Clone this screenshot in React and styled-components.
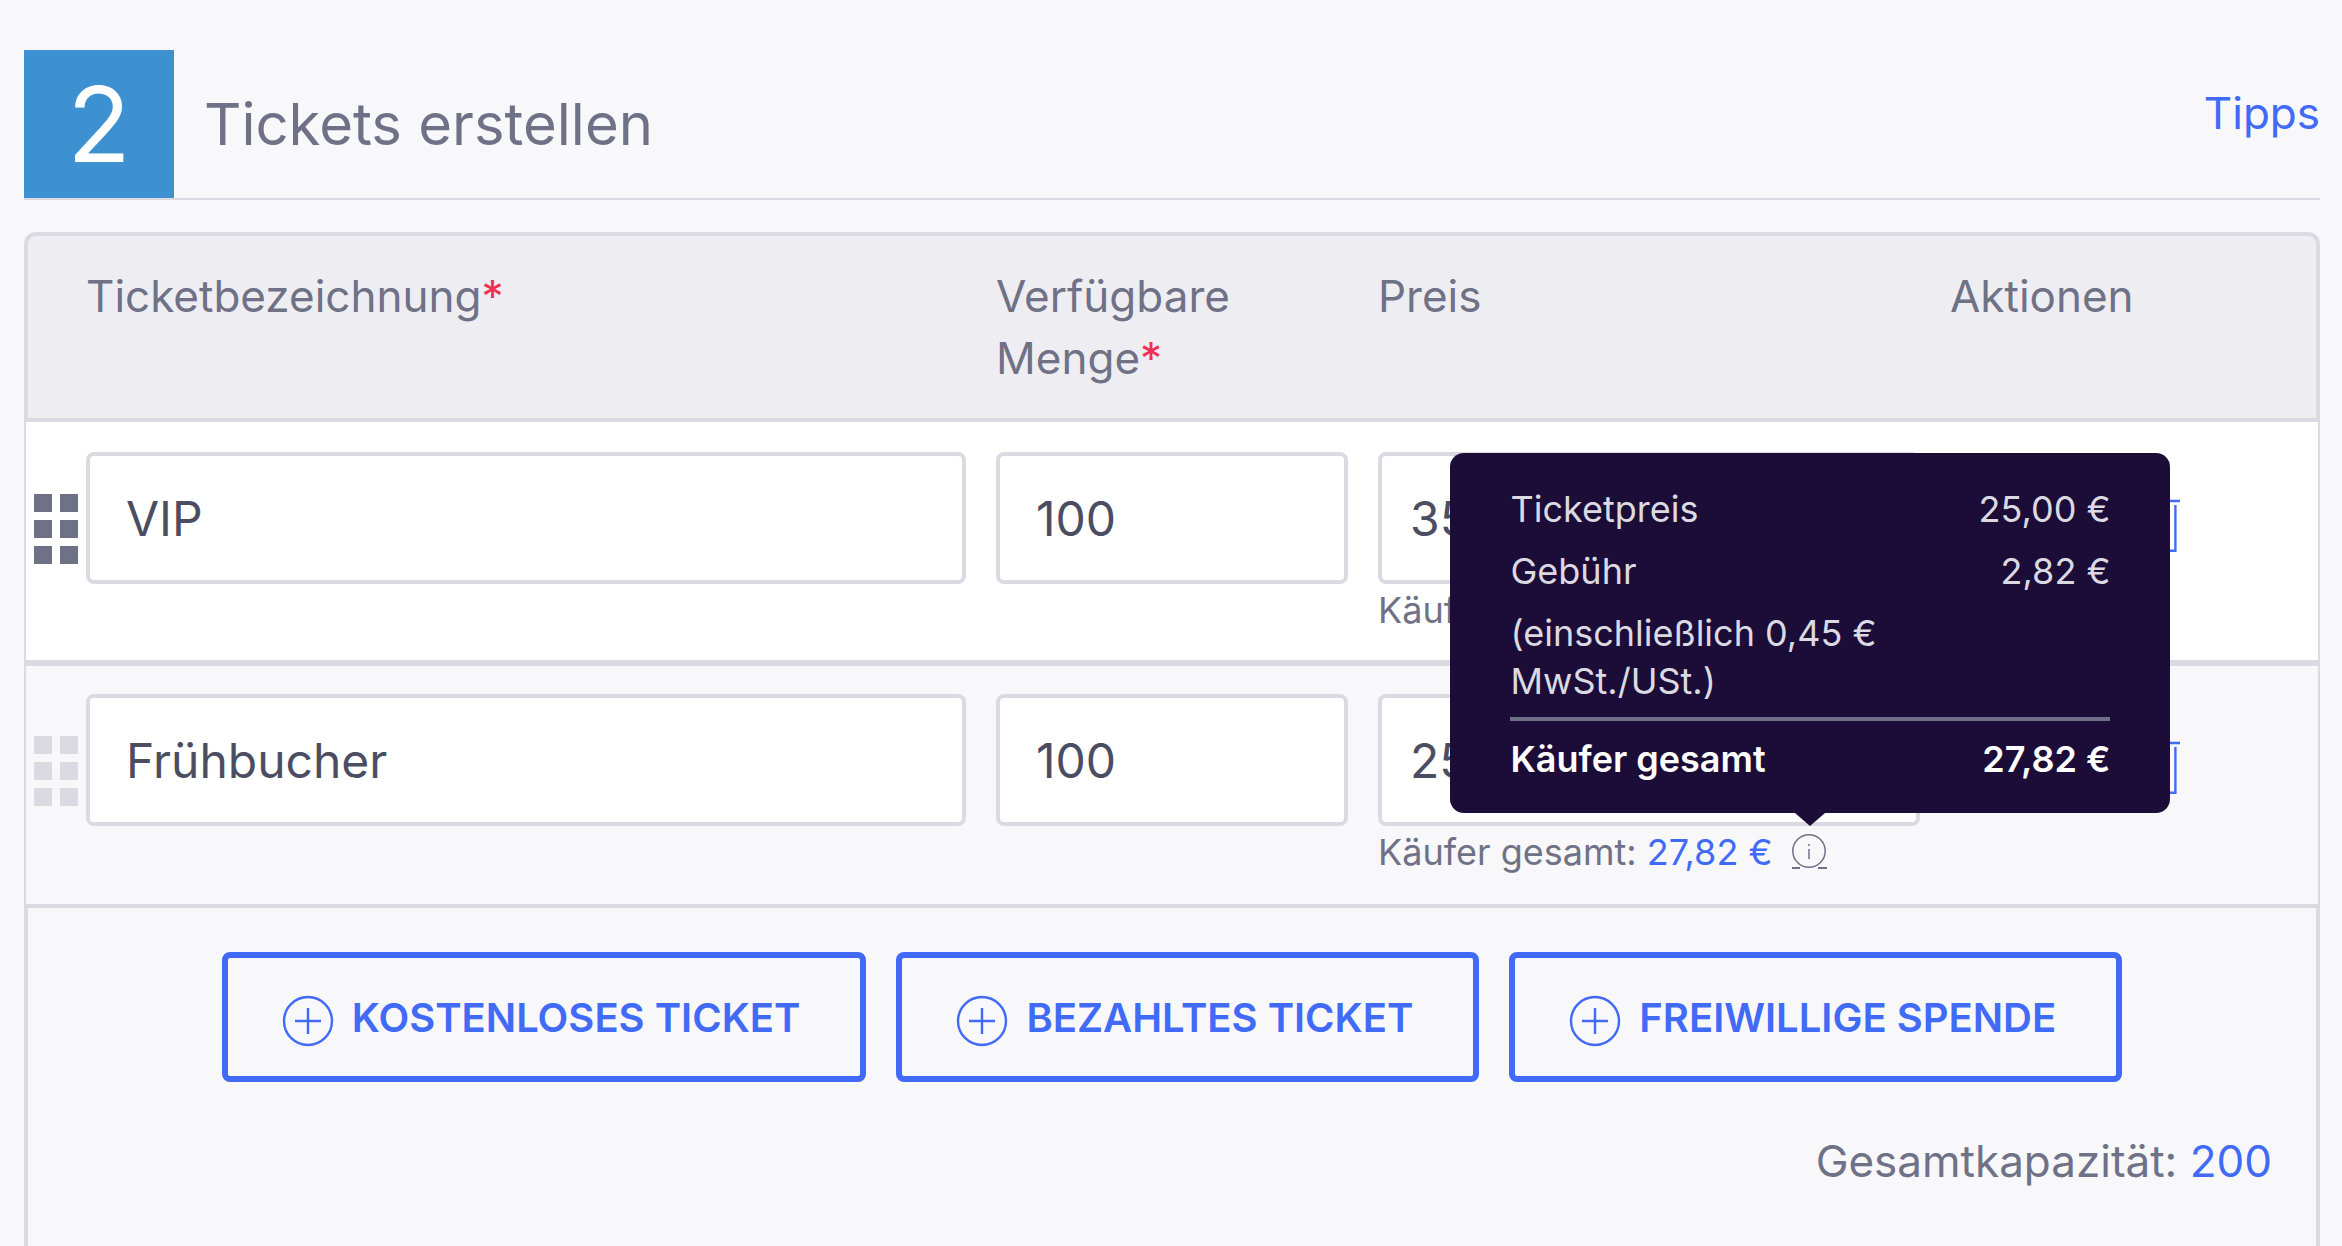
import React, { useState } from 'react';
import styled, { createGlobalStyle } from 'styled-components';

const GlobalStyle = createGlobalStyle`
  * {
    box-sizing: border-box;
  }
  body {
    margin: 0;
    background-color: #f8f7fa;
    color: #6f7287;
    font-family: Inter, 'Liberation Sans', sans-serif;
    font-size: 44px;
    line-height: 62px;
  }
`;

const Page = styled.main`
  display: flex;
  flex-direction: column;
  min-height: 100vh;
  padding: 50px 22px 0 24px;
`;

const StepHeader = styled.header`
  display: flex;
  align-items: center;
  gap: 30px;
  margin-bottom: 32px;
  border-bottom: 2px solid #dbdae3;
`;

const StepNumber = styled.span`
  display: flex;
  align-items: center;
  justify-content: center;
  width: 150px;
  height: 148px;
  background-color: #3d91d0;
  color: #fff;
  font-size: 104px;
`;

const StepTitle = styled.h2`
  flex: 1;
  margin: 0;
  font-size: 58px;
  font-weight: 400;
`;

const TipsLink = styled.a`
  align-self: flex-start;
  margin-top: 32px;
  color: #416af6;
  text-decoration: none;
`;

const TicketTable = styled.table`
  display: block;
`;

const TableHead = styled.thead`
  display: block;
`;

const TableBody = styled.tbody`
  display: block;
`;

const HeadRow = styled.tr`
  display: grid;
  grid-template-columns: 62px 910fr 382fr 572fr 370fr;
  padding: 33px 0;
  background-color: #eeedf2;
  border-radius: 12px 12px 0 0;
  box-shadow: inset 0 0 0 4px #dbdae3;
`;

const HeadCell = styled.th`
  padding: 0;
  font-weight: 400;
  text-align: left;
`;

const Required = styled.span`
  color: #f12f50;
`;

const TicketRow = styled.tr`
  display: grid;
  grid-template-columns: 60px 910fr 382fr 572fr 368fr;
  padding: ${props => props.$active ? '30px 0 26px' : '28px 0'};
  background-color: ${props => props.$active ? '#fff' : '#f8f7fa'};
  border: 2px solid #dbdae3;
  border-top-width: ${props => props.$active ? '0' : '2px'};
  border-bottom-width: ${props => props.$active ? '4px' : '2px'};
`;

const Cell = styled.td`
  padding: 0 30px 0 0;
`;

const DragCell = styled.td`
  padding: 42px 0 0 8px;
  line-height: 0;
`;

const DragHandle = styled.button`
  padding: 0;
  border: none;
  background: none;
  color: ${props => props.$active ? '#6f7287' : '#dbdae3'};
  cursor: move;
`;

const ActionsCell = styled.td`
  display: flex;
  align-items: flex-start;
  justify-content: flex-end;
  padding: 46px 138px 0 0;
`;

const IconButton = styled.button`
  padding: 0;
  border: none;
  background: none;
  color: #416af6;
  line-height: 0;
  cursor: pointer;
`;

const TextInput = styled.input`
  display: block;
  width: 100%;
  height: 132px;
  padding: 0 ${props => props.$tight ? '28px' : '36px'};
  border: 4px solid #dbdae3;
  border-radius: 8px;
  background-color: #fff;
  color: #4b4d63;
  font-family: inherit;
  font-size: 48px;
`;

const BuyerTotal = styled.div`
  display: flex;
  align-items: center;
  gap: 20px;
  margin-top: 2px;
  font-size: 36px;
  line-height: 48px;
  white-space: nowrap;
`;

const Amount = styled.span`
  color: #416af6;
`;

const InfoAnchor = styled.span`
  position: relative;
  display: flex;
`;

const InfoButton = styled.button`
  padding: 0;
  border: none;
  background: none;
  color: #6f7287;
  line-height: 0;
`;

const Tooltip = styled.div`
  position: absolute;
  left: 50%;
  bottom: 58px;
  z-index: 1;
  width: 720px;
  margin-left: -360px;
  padding: 32px 60px 30px;
  border-radius: 14px;
  background-color: #1b0d37;
  color: #dbdae3;
  white-space: normal;
  &::after {
    content: '';
    position: absolute;
    top: 100%;
    left: 50%;
    margin-left: -15px;
    border: 15px solid transparent;
    border-top: 13px solid #1b0d37;
    border-bottom: none;
  }
`;

const FeeLine = styled.div`
  display: flex;
  justify-content: space-between;
  margin-bottom: 14px;
`;

const FeeNote = styled.div`
  width: 420px;
  margin-bottom: 12px;
`;

const FeeTotal = styled.div`
  display: flex;
  justify-content: space-between;
  padding-top: 14px;
  border-top: 4px solid #6f7287;
  color: #fff;
  font-weight: 600;
`;

const TableFooter = styled.section`
  flex: 1;
  padding: 44px 44px 46px;
  border: 4px solid #dbdae3;
  border-top-width: 2px;
  border-bottom: none;
`;

const ButtonGroup = styled.div`
  display: flex;
  justify-content: center;
  gap: 30px;
`;

const AddButton = styled.button`
  display: flex;
  align-items: center;
  gap: 18px;
  height: 130px;
  padding: 0 60px 0 54px;
  border: 6px solid #416af6;
  border-radius: 8px;
  background: none;
  color: #416af6;
  font-family: inherit;
  font-size: 40px;
  font-weight: 600;
  white-space: nowrap;
  cursor: pointer;
  svg {
    margin-top: 8px;
  }
`;

const Capacity = styled.p`
  margin: 48px 0 0;
  text-align: right;
`;

const DotsIcon = () => (
  <svg width="44" height="70" viewBox="0 0 44 70" fill="currentColor">
    {[0, 26, 52].map((y) => (
      <React.Fragment key={y}>
        <rect x="0" y={y} width="18" height="18" />
        <rect x="26" y={y} width="18" height="18" />
      </React.Fragment>
    ))}
  </svg>
);

const PlusIcon = () => (
  <svg width="52" height="52" viewBox="0 0 52 52" fill="none" stroke="currentColor" strokeWidth="2.4">
    <circle cx="26" cy="26" r="24" />
    <path d="M26 13v26M13 26h26" />
  </svg>
);

const InfoIcon = () => (
  <svg width="36" height="38" viewBox="0 0 36 38" fill="none" stroke="currentColor">
    <circle cx="17" cy="18" r="16.2" strokeWidth="1.5" />
    <path d="M17 16v10M17 11v2" strokeWidth="1.5" />
    <path d="M0 35h8M26 35h9" strokeWidth="2" />
  </svg>
);

const TrashIcon = () => (
  <svg width="46" height="56" viewBox="0 0 46 56" fill="none" stroke="currentColor" strokeWidth="2.4">
    <path d="M0 3h46M15 3V1h16v2M5 7v45.8h36.4V7M16 15v28M23 15v28M30 15v28" />
  </svg>
);

const addOptions = ['KOSTENLOSES TICKET', 'BEZAHLTES TICKET', 'FREIWILLIGE SPENDE'];

const App = () => {
  const [tickets, setTickets] = useState([
    { name: 'VIP', quantity: '100', price: '35,00', active: true },
    { name: 'Frühbucher', quantity: '100', price: '25,00', total: '27,82 €' },
  ]);

  const update = (index, field) => (e) => {
    const value = e.target.value;
    setTickets((prev) => prev.map((ticket, i) => (i === index ? { ...ticket, [field]: value } : ticket)));
  };

  return (
    <>
      <GlobalStyle />
      <Page>
        <StepHeader>
          <StepNumber>2</StepNumber>
          <StepTitle>Tickets erstellen</StepTitle>
          <TipsLink href="#tipps">Tipps</TipsLink>
        </StepHeader>
        <TicketTable>
          <TableHead>
            <HeadRow>
              <HeadCell />
              <HeadCell>Ticketbezeichnung<Required>*</Required></HeadCell>
              <HeadCell>Verfügbare<br />Menge<Required>*</Required></HeadCell>
              <HeadCell>Preis</HeadCell>
              <HeadCell>Aktionen</HeadCell>
            </HeadRow>
          </TableHead>
          <TableBody>
            {tickets.map((ticket, index) => (
              <TicketRow key={index} $active={ticket.active}>
                <DragCell>
                  <DragHandle $active={ticket.active} aria-label="Verschieben"><DotsIcon /></DragHandle>
                </DragCell>
                <Cell>
                  <TextInput aria-label="Ticketbezeichnung" value={ticket.name} onChange={update(index, 'name')} />
                </Cell>
                <Cell>
                  <TextInput aria-label="Verfügbare Menge" value={ticket.quantity} onChange={update(index, 'quantity')} />
                </Cell>
                <Cell>
                  <TextInput $tight aria-label="Preis" value={ticket.price} onChange={update(index, 'price')} />
                  <BuyerTotal>
                    <span>Käufer gesamt: {ticket.total && <Amount>{ticket.total}</Amount>}</span>
                    {ticket.total && (
                      <InfoAnchor>
                        <InfoButton aria-label="Gebühren anzeigen"><InfoIcon /></InfoButton>
                        <Tooltip role="tooltip">
                          <FeeLine><span>Ticketpreis</span><span>25,00 €</span></FeeLine>
                          <FeeLine><span>Gebühr</span><span>2,82 €</span></FeeLine>
                          <FeeNote>(einschließlich 0,45 € MwSt./USt.)</FeeNote>
                          <FeeTotal><span>Käufer gesamt</span><span>27,82 €</span></FeeTotal>
                        </Tooltip>
                      </InfoAnchor>
                    )}
                  </BuyerTotal>
                </Cell>
                <ActionsCell>
                  <IconButton aria-label="Löschen"><TrashIcon /></IconButton>
                </ActionsCell>
              </TicketRow>
            ))}
          </TableBody>
        </TicketTable>
        <TableFooter>
          <ButtonGroup>
            {addOptions.map((label) => (
              <AddButton key={label}><PlusIcon />{label}</AddButton>
            ))}
          </ButtonGroup>
          <Capacity>Gesamtkapazität: <Amount>200</Amount></Capacity>
        </TableFooter>
      </Page>
    </>
  );
};

export default App;
